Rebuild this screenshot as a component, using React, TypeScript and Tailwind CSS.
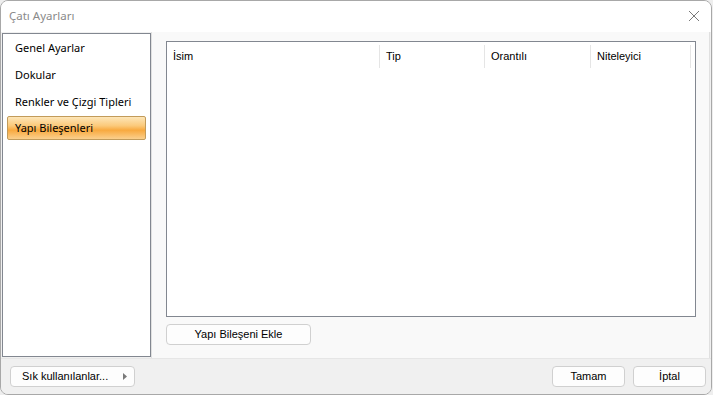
import React from "react";

const seg = { fontFamily: '"Noto Sans", "Open Sans", sans-serif' };
const ms = { fontFamily: '"Liberation Sans", Arial, sans-serif' };

function Btn({ children, className = "" }: { children: React.ReactNode; className?: string }) {
  return (
    <div
      className={`h-[21px] flex items-center justify-center rounded-[4px] border border-[#d0d0d0] bg-[#fdfdfd] text-[11px] text-black ${className}`}
      style={ms}
    >
      {children}
    </div>
  );
}

export default function App() {
  const cols = [
    { name: "İsim", w: 213 },
    { name: "Tip", w: 105 },
    { name: "Orantılı", w: 106 },
    { name: "Niteleyici", w: 100 },
  ];
  return (
    <div className="w-[713px] h-[395px] bg-[#eeeeee] overflow-hidden">
      <div className="w-[712px] h-[395px] border border-[#a8a8a8] rounded-[8px] overflow-hidden flex flex-col bg-[#f0f0f0]">
        <div className="h-[31px] shrink-0 bg-white flex items-center justify-between pl-[8px] pr-[10px] pb-[2px]">
          <span className="text-[11.5px] text-[#8a8a8a]" style={seg}>
            Çatı Ayarları
          </span>
          <svg width="12" height="12" viewBox="0 0 12 12" className="mr-[1px]">
            <path d="M1 1L11 11M11 1L1 11" stroke="#7a7a7a" strokeWidth="1" />
          </svg>
        </div>
        <div className="flex-1 flex min-h-0">
          <div className="w-[150px] pl-[1px] pt-[1px] pb-[1px] flex shrink-0">
            <div className="flex-1 border border-[#828790] bg-white pt-[1px] px-[4px]" style={seg}>
              {["Genel Ayarlar", "Dokular", "Renkler ve Çizgi Tipleri"].map((t) => (
                <div key={t} className="h-[27px] flex items-center pl-[8px] text-[11px] text-black">
                  {t}
                </div>
              ))}
              <div className="h-[24px] flex items-center pl-[7px] text-[11px] text-black rounded-[2px] border border-[#c29b5a] bg-[linear-gradient(to_bottom,#fde6b8_0%,#fbc97a_40%,#f8a93f_60%,#fbd08d_100%)]">
                Yapı Bileşenleri
              </div>
            </div>
          </div>
          <div className="flex-1 bg-[#f9f9f9] border-l border-[#e0e0e0] pl-[14px] pr-[13px] pt-[9px] flex flex-col mr-[1px] border-r">
            <div className="h-[276px] border border-[#828790] bg-white">
              <div className="flex h-[26px] pt-[3px]" style={ms}>
                {cols.map((c) => (
                  <div
                    key={c.name}
                    className="border-r border-[#e5e5e5] flex items-center pl-[6px] text-[11px] text-black"
                    style={{ width: c.w }}
                  >
                    {c.name}
                  </div>
                ))}
              </div>
            </div>
            <Btn className="w-[145px] mt-[7px] ml-[0px]">Yapı Bileşeni Ekle</Btn>
          </div>
        </div>
        <div className="h-[36px] shrink-0 border-t border-[#e6e6e6] bg-[#f0f0f0] flex items-center px-[9px]">
          <Btn className="w-[125px] justify-start pl-[11px] relative">
            Sık kullanılanlar...
            <svg width="4" height="7" viewBox="0 0 4 7" className="absolute right-[7px] top-[6px]">
              <path d="M0 0L4 3.5L0 7Z" fill="#7a7a7a" />
            </svg>
          </Btn>
          <div className="flex-1" />
          <Btn className="w-[73px] mr-[8px]">Tamam</Btn>
          <Btn className="w-[73px] mr-[-4px]">İptal</Btn>
        </div>
      </div>
    </div>
  );
}
